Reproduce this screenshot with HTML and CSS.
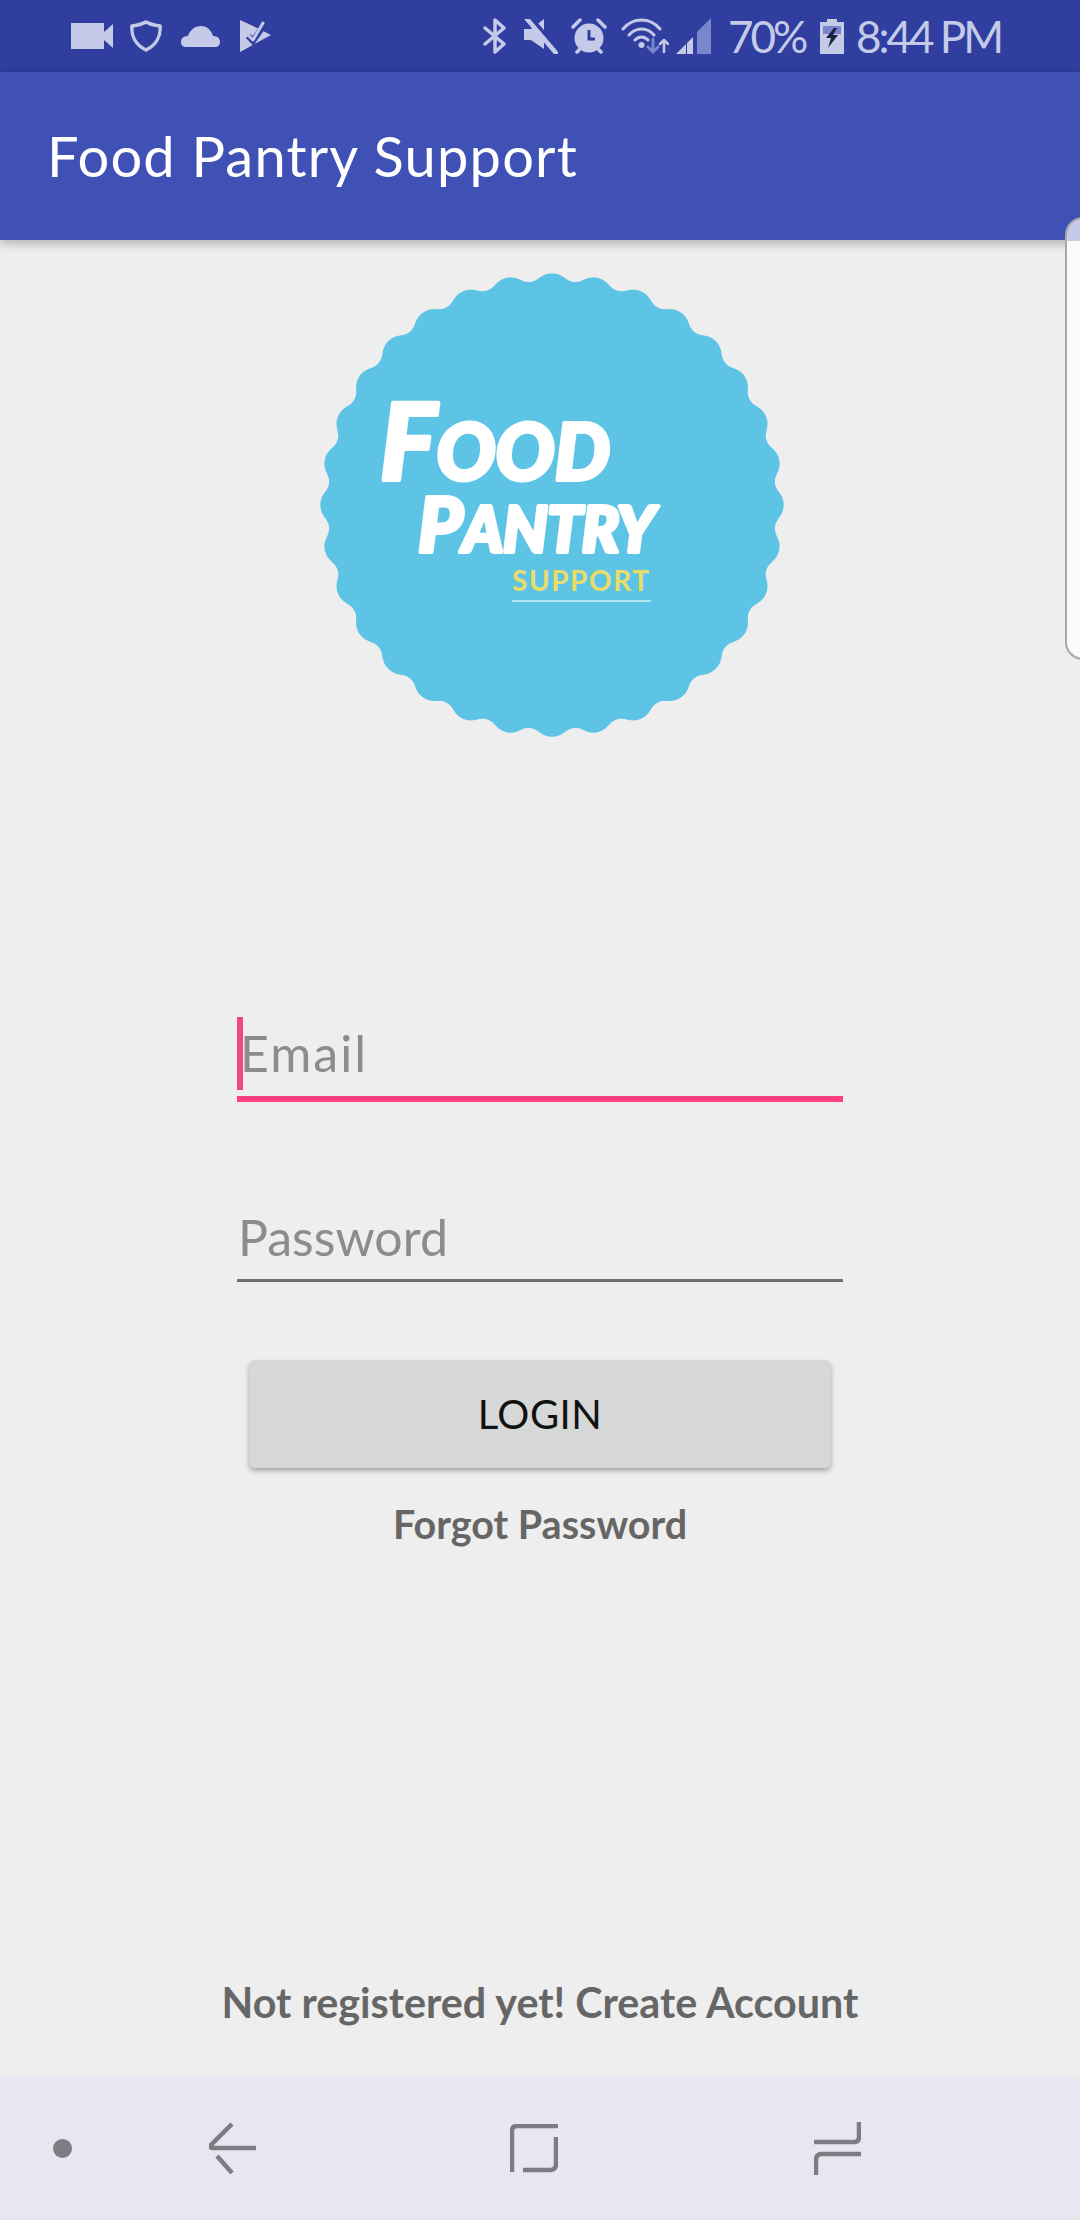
FILE: index.html
```html
<!DOCTYPE html>
<html lang="en">
<head>
<meta charset="utf-8">
<title>Food Pantry Support</title>
<link rel="stylesheet" href="styles.css">
</head>
<body>
<div class="screen">
  <header class="status">
    <svg class="i-video" width="42" height="26" viewBox="0 0 42 26"><path class="f" d="M0 0H33V26H0ZM33 9L42 1V25L33 17Z"/></svg>
    <svg class="i-shield" width="32" height="32" viewBox="0 0 32 32"><path class="s" stroke-width="3.5" d="M16 2C21 5 25 5 30 6C31 16 26 25 16 30C6 25 1 16 2 6C7 5 11 5 16 2Z"/></svg>
    <svg class="i-cloud" width="39" height="21" viewBox="0 0 39 21"><path class="f" d="M5 21C2 21 0 19 0 16C0 12 3 10 7 10C9 4 14 0 20 0C26 0 30 4 32 10C36 10 39 12 39 16C39 19 37 21 34 21Z"/></svg>
    <svg class="i-play" width="31" height="32" viewBox="0 0 31 32"><path class="f" d="M0 0L13 6L31 15L0 32Z"/><path class="k" stroke-width="6" d="M8 16L13 21L24 5"/><path class="s" stroke-width="3" d="M8 15L13 20L23 3"/></svg>
    <svg class="i-bt" width="25" height="38" viewBox="0 0 25 38"><path class="s" stroke-width="3.5" d="M3 11L22 27L13 35V3L22 11L3 27"/></svg>
    <svg class="i-mute" width="34" height="35" viewBox="0 0 34 35"><path class="f" d="M0 10H7L20 0V30L7 21H0Z"/><path class="k" stroke-width="7" d="M6 0L33 32"/><path class="s" stroke-width="4.500" d="M3 0L32 34"/></svg>
    <svg class="i-alarm" width="36" height="36" viewBox="0 0 36 36"><circle class="f" cx="18" cy="20" r="14.500"/><path class="k" stroke-width="3" d="M18 12V21H24"/><path class="s" stroke-width="3.5" d="M2 9L9 2M34 9L27 2M6 34L9 31M30 34L27 31"/></svg>
    <svg class="i-wifi" width="48" height="36" viewBox="0 0 48 36"><path class="s" stroke-width="3" d="M2 11C12 -1 29 -1 39 11M8 17C15 9 26 9 33 17M14 22C18 18 23 18 27 22"/><circle class="f" cx="20.500" cy="27" r="3"/><path class="s dim" stroke-width="3" d="M32 21V34M27 29L32 34L37 29"/><path class="s" stroke-width="2.500" d="M43 34V22M39 26L43 22L47 26"/></svg>
    <svg class="i-signal" width="35" height="36" viewBox="0 0 35 36"><path class="dimf" d="M21 14L35 0V36H21Z"/><path class="f" d="M0 36L10 26V36ZM11 36V25L17 19V36Z"/></svg>
    <span class="status-text pct">70%</span>
    <svg class="i-batt" width="24" height="35" viewBox="0 0 24 35"><path class="f" d="M7 0H17V3H24V35H0V3H7Z"/><path class="dimf" d="M3 7H21V15H3Z"/><path class="boltf" d="M14 9L6 19H11L8 29L18 16H13L17 9Z"/></svg>
    <span class="status-text clock">8:44 PM</span>
  </header>

  <div class="toolbar">Food Pantry Support</div>

  <main class="content">
    <svg class="logo" width="480" height="480" viewBox="0 0 480 480">
      <defs>
        <filter id="soft" x="-5%" y="-5%" width="110%" height="110%" color-interpolation-filters="sRGB">
          <feGaussianBlur stdDeviation="3.5"/>
          <feColorMatrix type="matrix" values="0 0 0 0 0.369  0 0 0 0 0.769  0 0 0 0 0.902  0 0 0 10 -4.5"/>
        </filter>
      </defs>
      <g class="logo-shape">
        <circle class="logo-base" cx="240" cy="240" r="224"/>
        <circle class="logo-scallop" cx="240" cy="240" r="212" pathLength="32"/>
      </g>
      <text class="logo-brush" x="68" y="215" textLength="230"><tspan class="logo-big">F</tspan>OOD</text>
      <text class="logo-brush logo-second" x="106" y="287" textLength="237"><tspan class="logo-mid">P</tspan>ANTRY</text>
      <text class="logo-support" x="200" y="326" textLength="137">SUPPORT</text>
      <path class="logo-rule" d="M200 336H339"/>
    </svg>

    <form class="form">
      <div class="field field-active"><span class="caret"></span><span class="hint">Email</span></div>
      <div class="field field-idle"><span class="hint">Password</span></div>
      <button class="login" type="button">LOGIN</button>
      <a class="link forgot">Forgot Password</a>
    </form>

    <a class="link register">Not registered yet! Create Account</a>
  </main>

  <nav class="nav">
    <span class="nav-dot"></span>
    <svg class="n-back" width="47" height="51" viewBox="0 0 47 51"><path class="n" d="M23 1L2 22Q0 25 4 25H47M8 33L23 50" /></svg>
    <svg class="n-home" width="48" height="49" viewBox="0 0 48 49"><path class="n" d="M2 48V7Q2 2 7 2H48M46 13V40Q46 46 40 46H13"/></svg>
    <svg class="n-recent" width="47" height="53" viewBox="0 0 47 53"><path class="n" d="M45 0V15Q45 20 40 20H0M47 32H8Q2 32 2 38V53"/></svg>
  </nav>

  <aside class="edge"></aside>
</div>
</body>
</html>
```

FILE: styles.css
```css
* { box-sizing: border-box; }
html, body { margin: 0; padding: 0; }
body { width: 1080px; height: 2220px; overflow: hidden; background: #eeeeee; font-family: "Lato", "Open Sans", sans-serif; }

.screen { position: relative; width: 1080px; height: 2220px; display: flex; flex-direction: column; overflow: hidden; }

/* status bar */
.status { height: 72px; background: #303f9f; display: flex; align-items: center; padding-left: 71px; flex: none; }
.status svg { flex: none; display: block; }
.f { fill: #c5cae9; }
.s { fill: none; stroke: #c5cae9; stroke-linecap: round; stroke-linejoin: round; }
.k { fill: none; stroke: #303f9f; }
.dim { stroke: #7986cb; }
.dimf { fill: #7986cb; }
.boltf { fill: #1a2040; }
.i-video { margin-right: 17px; }
.i-shield { margin-right: 19px; }
.i-cloud { margin-right: 20px; }
.i-play { margin-right: 211px; }
.i-bt { margin-right: 17px; }
.i-mute { margin-right: 13px; }
.i-alarm { margin-right: 14px; }
.i-wifi { margin-right: 7px; }
.i-signal { margin-right: 17px; }
.status-text { color: #c5cae9; font-size: 44px; line-height: 72px; white-space: nowrap; }
.pct { width: 76px; margin-right: 16px; letter-spacing: -3px; }
.i-batt { margin-right: 12px; }
.clock { width: 150px; letter-spacing: -3px; }

/* toolbar */
.toolbar { height: 168px; background: #3f51b5; color: #ffffff; font-size: 56px; letter-spacing: 1.2px; line-height: 168px; padding-left: 47px; white-space: nowrap; box-shadow: 0 3px 10px rgba(0,0,0,.28); position: relative; z-index: 1; flex: none; }

/* main */
.content { flex: 1; display: flex; flex-direction: column; align-items: center; padding-top: 25px; }
.logo { display: block; flex: none; margin-left: 24px; }
.logo-shape { filter: url(#soft); }
.logo-base { fill: #5ec4e6; }
.logo-scallop { fill: none; stroke: #5ec4e6; stroke-width: 40; stroke-linecap: round; stroke-dasharray: 0 1; }
.logo-brush { fill: #ffffff; stroke: #ffffff; stroke-width: 4; stroke-linejoin: round; font-family: "Lato", sans-serif; font-weight: 900; font-style: italic; font-size: 78px; }
.logo-second { font-size: 62px; }
.logo-big { font-size: 106px; }
.logo-mid { font-size: 76px; }
.logo-support { fill: #e9dd6a; font-family: "Lato", sans-serif; font-size: 28px; font-weight: 700; }
.logo-rule { stroke: #b6e2ef; stroke-width: 2; fill: none; }

.form { width: 606px; margin-top: 272px; display: flex; flex-direction: column; align-items: stretch; flex: none; }
.field { position: relative; height: 85px; display: flex; align-items: flex-end; color: #8c8c8c; font-size: 50px; line-height: 64px; }
.hint { display: block; padding-left: 1px; }
.field-active { border-bottom: 6px solid #ff4081; padding-bottom: 11px; }
.field-active .hint { padding-left: 3px; letter-spacing: 2px; }
.field-idle { margin-top: 95px; border-bottom: 3px solid #6e6e6e; padding-bottom: 10px; }
.caret { position: absolute; left: 0; top: 0; width: 6px; height: 73px; background: #ec407a; opacity: .95; }

.login { margin: 78px 12px 0 12px; height: 108px; border: 0; border-radius: 6px; background: #d6d7d7; color: #111111; font-family: inherit; font-size: 40px; letter-spacing: .5px; padding: 0; box-shadow: 0 3px 5px rgba(0,0,0,.3); }
.link { color: #666666; font-weight: 700; white-space: nowrap; display: block; text-align: center; }
.forgot { font-size: 39.500px; line-height: 50px; margin-top: 31px; }
.register { font-size: 41.300px; line-height: 50px; margin-top: auto; margin-bottom: 49px; }

/* nav bar */
.nav { height: 144px; flex: none; background: #e6e7f0; display: flex; align-items: center; padding-left: 53px; }
.nav svg { display: block; flex: none; }
.nav-dot { width: 19px; height: 19px; border-radius: 50%; background: #7c7c82; margin-right: 137px; flex: none; }
.n { fill: none; stroke: #7c7c82; stroke-width: 4.500; }
.n-back { margin-right: 254px; }
.n-home { margin-right: 256px; }

/* edge panel handle */
.edge { position: absolute; top: 217px; left: 1065px; width: 40px; height: 443px; border: 2px solid #a8a8a8; border-radius: 18px; background: linear-gradient(#c5cae9 0 22px, #fbfbfb 22px); z-index: 2; }
```
